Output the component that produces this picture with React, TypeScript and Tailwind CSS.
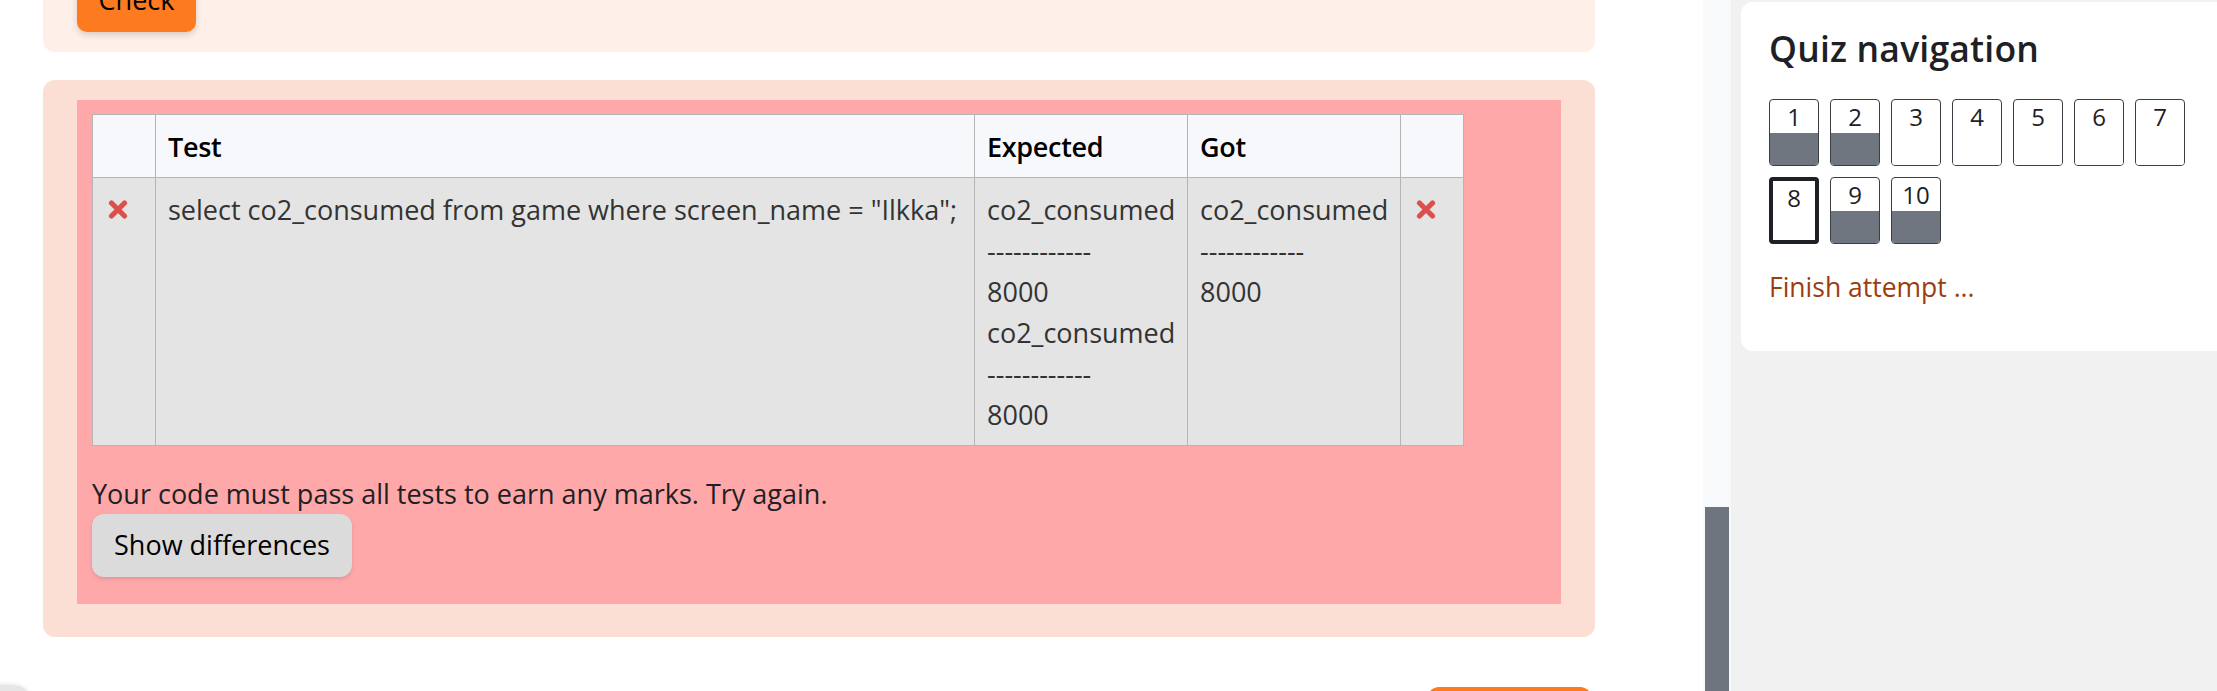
import React from "react";

// ─── Data ─────────────────────────────────────────────────────────────────────

type NavItem = { n: number; answered: boolean; current?: boolean };

const NAV: NavItem[] = [
  { n: 1, answered: true },
  { n: 2, answered: true },
  { n: 3, answered: false },
  { n: 4, answered: false },
  { n: 5, answered: false },
  { n: 6, answered: false },
  { n: 7, answered: false },
  { n: 8, answered: false, current: true },
  { n: 9, answered: true },
  { n: 10, answered: true },
];

const EXPECTED = ["co2_consumed", "------------", "8000", "co2_consumed", "------------", "8000"];
const GOT = ["co2_consumed", "------------", "8000"];

// ─── Small pieces ─────────────────────────────────────────────────────────────

function Cross() {
  return (
    <svg width="20" height="19" viewBox="0 0 20 19" className="block">
      <path d="M3.5 3 L16.5 16 M16.5 3 L3.5 16" stroke="#dc504c" strokeWidth="5.2" strokeLinecap="round" />
    </svg>
  );
}

function NavButton({ item }: { item: NavItem }) {
  const border = item.current ? "border-[4px] border-[#1d2125]" : "border border-[#3a3f45]";
  return (
    <div className={`w-[50px] h-[67px] rounded-[4px] overflow-hidden flex flex-col bg-white ${border}`}>
      <div className="h-[33px] flex items-center justify-center text-[24px] leading-none text-[#1d2125]">
        {item.n}
      </div>
      <div className={`flex-1 ${item.answered ? "bg-[#6f7680]" : "bg-white"}`} />
    </div>
  );
}

// ─── Page ─────────────────────────────────────────────────────────────────────

export default function App() {
  return (
    <div className="relative flex w-[2217px] h-[691px] overflow-hidden bg-white font-['Open_Sans',sans-serif] text-[#1d2125]">
      {/* Main column */}
      <div className="w-[1703px] shrink-0 pl-[43px]">
        <div className="w-[1552px]">
          {/* Previous question card, mostly scrolled away */}
          <div className="-mt-[40px] h-[92px] rounded-[12px] bg-[#fef0e8] flex items-end pl-[34px] pb-[20px]">
            <button className="w-[119px] h-[63px] rounded-[10px] bg-[#fe7a1f] text-[27px] text-black shadow-[0_3px_6px_rgba(0,0,0,0.15)]">
              Check
            </button>
          </div>

          {/* Outcome card */}
          <div className="mt-[28px] rounded-[12px] bg-[#fbded4] pt-[20px] px-[34px] pb-[33px]">
            <div className="bg-[#ffa8aa] pt-[14px] px-[15px] pb-[27px]">
              <table className="table-fixed border-collapse w-[1371px] text-[27px] leading-[41px]">
                <colgroup>
                  <col className="w-[63px]" />
                  <col className="w-[819px]" />
                  <col className="w-[213px]" />
                  <col className="w-[213px]" />
                  <col className="w-[63px]" />
                </colgroup>
                <thead>
                  <tr className="bg-[#f7f8fc] text-left text-black">
                    <th className="border border-[#b5b5b5] px-[12px] py-[10.5px]" />
                    <th className="border border-[#b5b5b5] px-[12px] py-[10.5px] font-semibold tracking-[-0.3px]">Test</th>
                    <th className="border border-[#b5b5b5] px-[12px] py-[10.5px] font-semibold tracking-[-0.3px]">Expected</th>
                    <th className="border border-[#b5b5b5] px-[12px] py-[10.5px] font-semibold tracking-[-0.3px]">Got</th>
                    <th className="border border-[#b5b5b5] px-[12px] py-[10.5px]" />
                  </tr>
                </thead>
                <tbody>
                  <tr className="bg-[#e4e4e4] align-top text-[#333333]">
                    <td className="border border-[#b5b5b5] px-[15px] py-[10.5px]">
                      <div className="h-[41px] flex items-center"><Cross /></div>
                    </td>
                    <td className="border border-[#b5b5b5] px-[12px] py-[10.5px] whitespace-nowrap">
                      select co2_consumed from game where screen_name = "Ilkka";
                    </td>
                    <td className="border border-[#b5b5b5] px-[12px] py-[10.5px] whitespace-nowrap">
                      {EXPECTED.map((l, i) => (
                        <div key={i}>{l}</div>
                      ))}
                    </td>
                    <td className="border border-[#b5b5b5] px-[12px] py-[10.5px] whitespace-nowrap">
                      {GOT.map((l, i) => (
                        <div key={i}>{l}</div>
                      ))}
                    </td>
                    <td className="border border-[#b5b5b5] px-[15px] py-[10.5px]">
                      <div className="h-[41px] flex items-center"><Cross /></div>
                    </td>
                  </tr>
                </tbody>
              </table>

              <p className="mt-[27px] text-[27px] leading-[41px] text-[#1d2125]">
                Your code must pass all tests to earn any marks. Try again.
              </p>
              <button className="w-[260px] h-[63px] rounded-[12px] bg-[#dbdbdb] text-[27px] font-medium text-black shadow-[0_2px_4px_rgba(0,0,0,0.12)]">
                Show differences
              </button>
            </div>
          </div>

          {/* Next page button, peeking in */}
          <div className="mt-[50px] flex justify-end pr-[3px]">
            <div className="w-[165px] h-[63px] rounded-[12px] bg-[#fe7a1f]" />
          </div>
        </div>
      </div>

      {/* Scroll track */}
      <div className="w-[28px] shrink-0 bg-[#f8f9fa] flex flex-col px-[2px]">
        <div className="mt-[507px] flex-1 bg-[#6e757f]" />
      </div>

      {/* Drawer */}
      <div className="flex-1 bg-[#f1f1f1] pl-[10px] pt-[2px]">
        <div className="h-[349px] rounded-l-[12px] bg-white pl-[28px] pt-[25px]">
          <h2 className="text-[35.5px] leading-[42px] font-semibold tracking-[0.2px] text-[#1d2125]">Quiz navigation</h2>
          <div className="mt-[30px] w-[420px] flex flex-wrap gap-[11px]">
            {NAV.map((item) => (
              <NavButton key={item.n} item={item} />
            ))}
          </div>
          <div className="mt-[24px] text-[26.5px] leading-[39px] text-[#9c3d0c]">Finish attempt ...</div>
        </div>
      </div>

      {/* Floating round button in the bottom-left corner */}
      <div className="absolute left-[-40px] top-[685px] w-[72px] h-[40px] rounded-full bg-[#e6e6e6] shadow-[0_0_4px_rgba(0,0,0,0.15)]" />
    </div>
  );
}
